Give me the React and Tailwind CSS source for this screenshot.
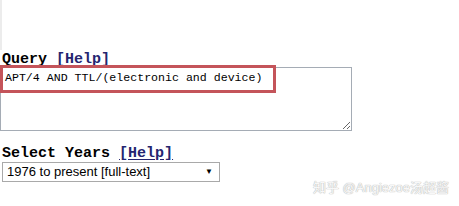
export default function App() {
  return (
    <div className="relative w-[459px] h-[206px] bg-white overflow-hidden">
      <div className="absolute left-0 top-0 w-[2px] h-[50px] bg-[#ececec]" />
      <div className="pt-[51px] pl-[2px] flex flex-col items-start">
        <div className="font-bold text-[15px] leading-[17px] text-black" style={{ fontFamily: '"Liberation Mono", monospace' }}>
          Query <span className="text-[#252570]">[Help]</span>
        </div>
        <div className="relative -ml-[2px] -mt-[1px]">
          <textarea
            readOnly
            defaultValue="APT/4 AND TTL/(electronic and device)"
            className="block w-[352px] h-[64px] border border-[#a5acb5] pl-[4px] pt-[3px] text-[11.6px] leading-[14px] text-black outline-none"
            style={{ fontFamily: '"Liberation Mono", monospace' }}
          />
          <div className="absolute left-0 top-[-2px] w-[276px] h-[28px] border-[3px] border-[#c4545a]" />
        </div>
        <div className="mt-[14px] font-bold text-[15px] leading-[17px] text-black" style={{ fontFamily: '"Liberation Mono", monospace' }}>
          Select Years <span className="text-[#252570] underline underline-offset-2">[Help]</span>
        </div>
        <div className="w-[218px] h-[20px] border border-[#a9a9a9] flex items-center justify-between pl-[4px] pr-[6px] text-[13px] text-black" style={{ fontFamily: '"Liberation Sans", Arial, sans-serif' }}>
          <span>1976 to present [full-text]</span>
          <span className="text-[8px]">▼</span>
        </div>
      </div>
      <div
        className="absolute left-[313px] top-[178px] text-[13px] text-[#f8f8f8]"
        style={{ fontFamily: '"Liberation Sans", "Noto Sans CJK SC", sans-serif', textShadow: '0 0 1px #b4b4b4, 0 0 1px #b4b4b4' }}
      >
        知乎 @Angiezoe汤超酱
      </div>
    </div>
  );
}
